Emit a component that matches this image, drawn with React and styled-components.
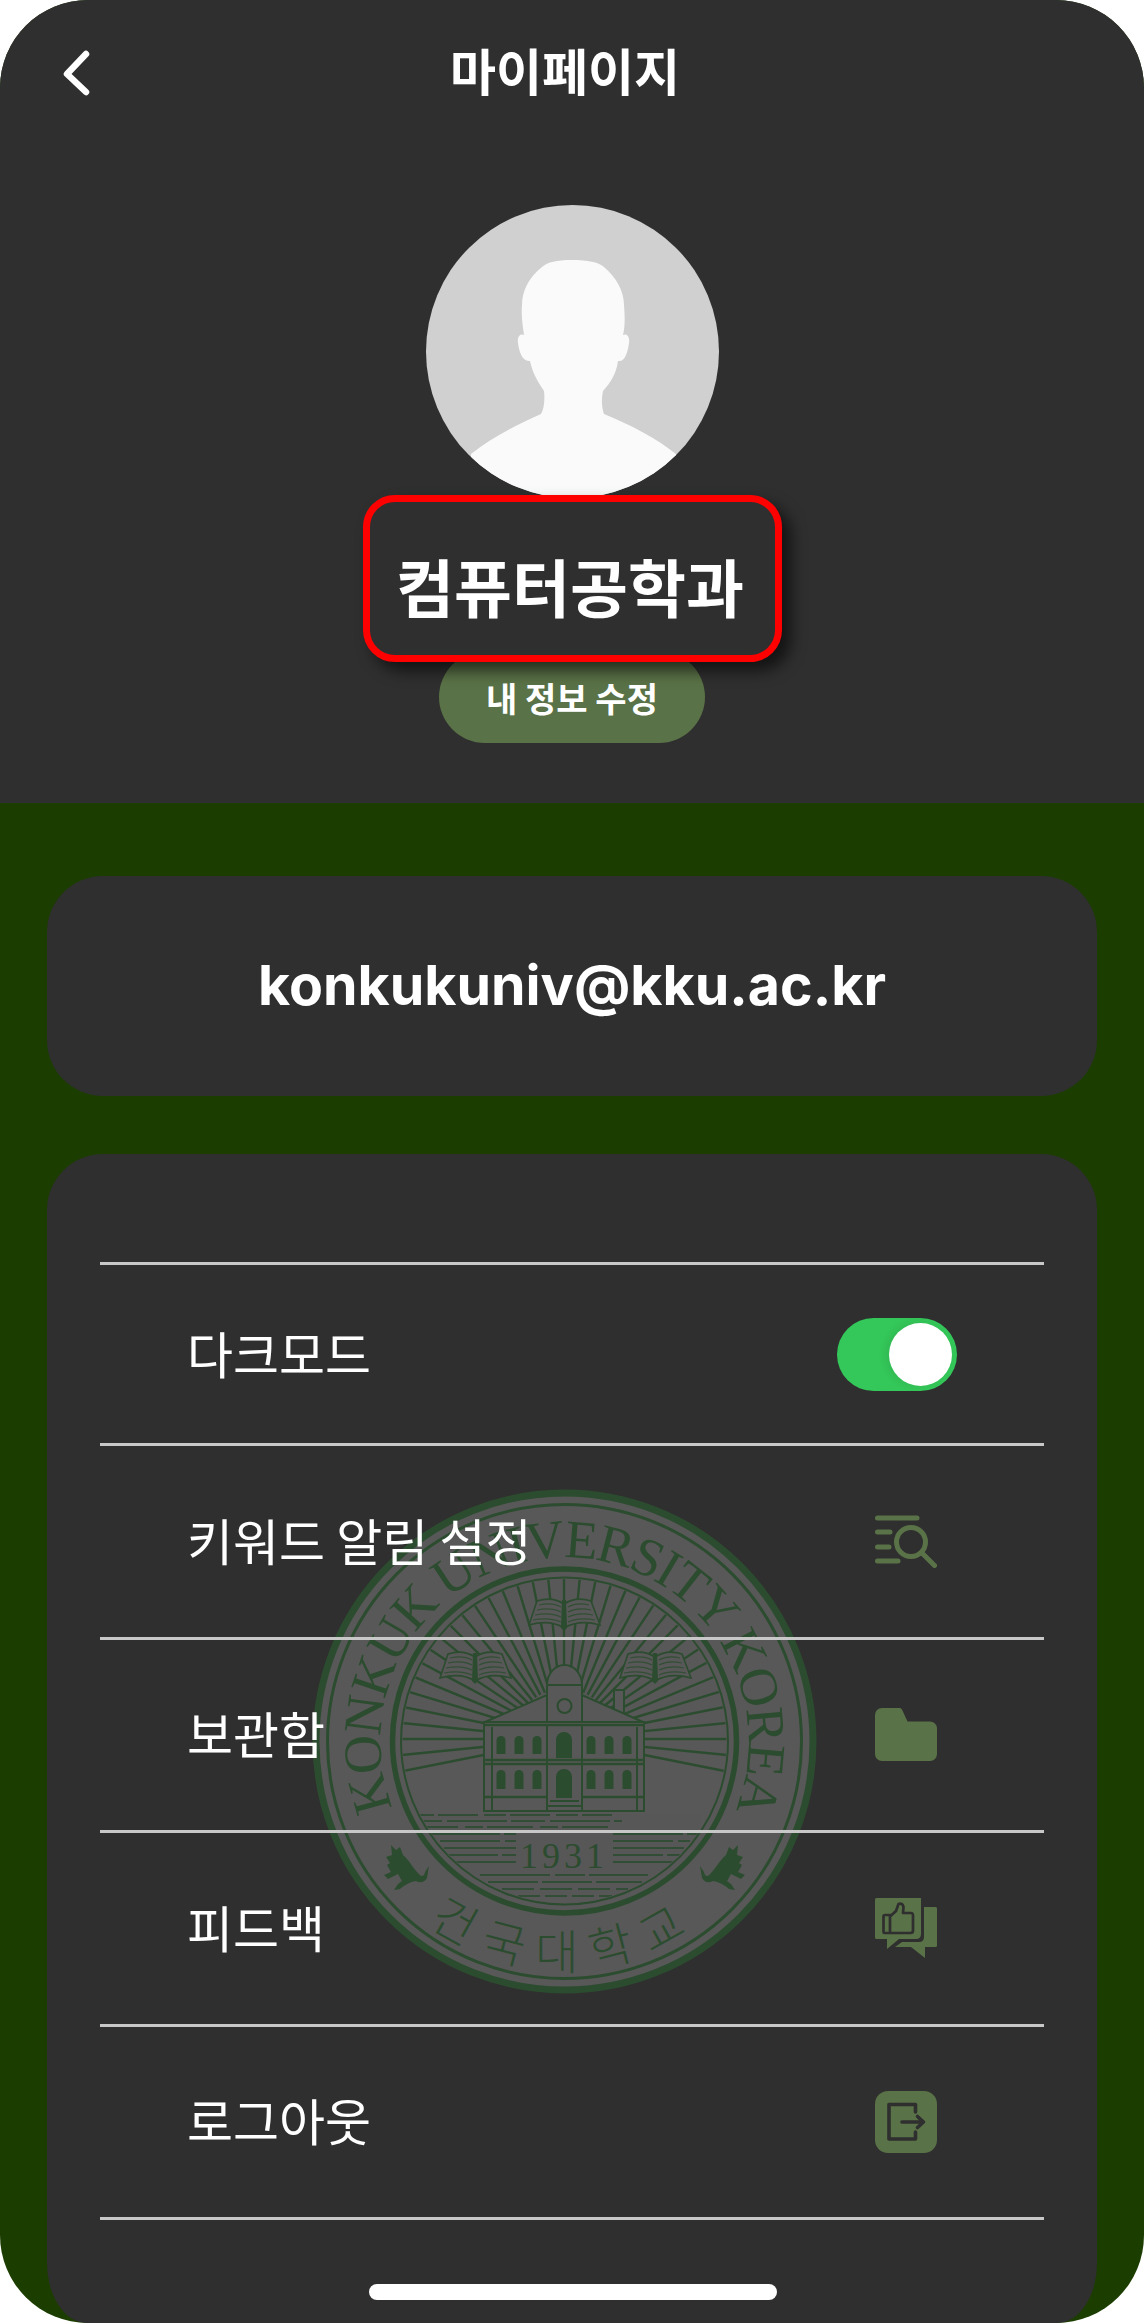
import styled, { createGlobalStyle } from "styled-components";

const dark = "#2f2f2f";
const moss = "#5a7247";
const sealInk = "#2c4c2f";
const sealFill = "#585858";
const korean = `"Noto Sans CJK KR", "Noto Sans", sans-serif`;

const GlobalStyle = createGlobalStyle`
  html, body {
    margin: 0;
    padding: 0;
    background: #ffffff;
  }
`;

const Phone = styled.div`
  position: relative;
  display: flex;
  flex-direction: column;
  width: 1144px;
  height: 2323px;
  overflow: hidden;
  border-radius: 88px;
  background-color: #1c3d00;
  font-family: ${korean};
  color: #ffffff;
`;

const Header = styled.header`
  display: flex;
  flex-direction: column;
  align-items: center;
  height: 803px;
  box-sizing: border-box;
  flex-shrink: 0;
  padding-top: 39px;
  background-color: ${dark};
`;

const NavBar = styled.nav`
  display: grid;
  grid-template-columns: 388px 1fr;
  align-items: center;
  align-self: stretch;
  height: 60px;
  padding-left: 62px;
`;

const BackIcon = styled.svg`
  width: 30px;
  height: 46px;
`;

const Title = styled.h1`
  margin: 0;
  padding-bottom: 8px;
  font-size: 50px;
  font-weight: 700;
  line-height: 60px;
  white-space: nowrap;
`;

const Avatar = styled.svg`
  display: block;
  width: 293px;
  height: 293px;
  margin-top: 106px;
`;

const NameBox = styled.div`
  position: relative;
  z-index: 2;
  display: flex;
  align-items: center;
  justify-content: center;
  box-sizing: border-box;
  width: 419px;
  height: 167px;
  margin-top: -3px;
  padding: 11px 4px 0 0;
  border: 7px solid #ff0000;
  border-radius: 32px;
  background-color: ${dark};
  box-shadow: 9px 9px 15px rgba(0, 0, 0, 0.6);
  font-size: 63px;
  font-weight: 700;
  white-space: nowrap;
`;

const EditButton = styled.button`
  display: block;
  width: 266px;
  height: 92px;
  margin-top: -11px;
  padding: 0;
  border: none;
  border-radius: 46px;
  background-color: ${moss};
  color: #ffffff;
  font-family: inherit;
  font-size: 34px;
  font-weight: 700;
  white-space: nowrap;
`;

const Body = styled.main`
  display: flex;
  flex: 1;
  flex-direction: column;
  gap: 58px;
  padding: 73px 47px 0;
`;

const EmailCard = styled.div`
  display: flex;
  align-items: center;
  justify-content: center;
  height: 220px;
  box-sizing: border-box;
  padding-bottom: 4px;
  border-radius: 56px;
  background-color: ${dark};
  font-family: Inter, "Liberation Sans", sans-serif;
  font-size: 55.5px;
  font-weight: 700;
`;

const MenuCard = styled.section`
  position: relative;
  flex: 1;
  padding: 108px 53px 0;
  border-radius: 56px 56px 40px 40px / 56px 56px 60px 60px;
  background-color: ${dark};
`;

const Seal = styled.svg`
  position: absolute;
  top: 335px;
  left: 265px;
  width: 505px;
  height: 505px;
`;

const MenuList = styled.ul`
  position: relative;
  margin: 0;
  padding: 0;
  list-style: none;
  border-top: 3px solid #c8c8c8;
`;

const MenuRow = styled.li`
  display: flex;
  align-items: center;
  justify-content: space-between;
  height: ${(p) => (p.$first ? 178 : 190.5)}px;
  padding: 0 87px 0 87px;
  border-bottom: 3px solid #c8c8c8;
`;

const MenuLabel = styled.span`
  padding-bottom: 5px;
  font-size: 50px;
  font-weight: 400;
  white-space: nowrap;
`;

const Toggle = styled.div`
  position: relative;
  width: 120px;
  height: 73px;
  border-radius: 37px;
  background-color: #34c759;
`;

const ToggleKnob = styled.span`
  position: absolute;
  top: 5px;
  right: 5px;
  width: 63px;
  height: 63px;
  border-radius: 50%;
  background-color: #ffffff;
  box-shadow: -3px 0 8px rgba(0, 0, 0, 0.08);
`;

const RowIcon = styled.svg`
  display: block;
  width: 62px;
  height: ${(p) => p.$h}px;
  margin-right: 20px;
`;

const HomeBar = styled.div`
  position: absolute;
  bottom: 23px;
  left: 369px;
  width: 408px;
  height: 16px;
  border-radius: 8px;
  background-color: #ffffff;
`;

const SealText = styled.text`
  font-family: "Liberation Serif", serif;
  fill: ${sealInk};
`;

const SealKorean = styled.text`
  font-family: ${korean};
  font-weight: 300;
  fill: ${sealInk};
`;

const SearchIcon = () => (
  <RowIcon $h={53} viewBox="0 0 62 53" fill="none" stroke={moss} strokeWidth="5" strokeLinecap="round">
    <path d="M2.5 3H42M2.5 17H15M2.5 32H14M2.5 46H23" />
    <circle cx="36" cy="27" r="14.5" />
    <path d="M47 38L59.5 50.5" />
  </RowIcon>
);

const FolderIcon = () => (
  <RowIcon $h={53} viewBox="0 0 62 53" fill={moss}>
    <path d="M7 0H24C25.5 0 26.5.6 27.2 2L32.5 13.5H55A7 7 0 0 1 62 20.5V46A7 7 0 0 1 55 53H7A7 7 0 0 1 0 46V7A7 7 0 0 1 7 0Z" />
  </RowIcon>
);

const FeedbackIcon = () => (
  <RowIcon $h={60} viewBox="0 0 62 60">
    <path fill={moss} d="M49 9H60.5A1.5 1.5 0 0 1 62 10.5V47.5A1.5 1.5 0 0 1 60.5 49H50V60L36 49H20L27 44H44Q49 44 49 39Z" />
    <path fill={moss} d="M1.5 0H46V36Q46 41 41 41H24L12 51V41H1.5A1.5 1.5 0 0 1 0 39.5V1.5A1.5 1.5 0 0 1 1.5 0Z" />
    <path
      fill="none"
      stroke={dark}
      strokeWidth="2.7"
      strokeLinejoin="round"
      d="M10 17H15V35H10Q8.5 35 8.5 33.5V18.5Q8.5 17 10 17ZM15 18.5L21 13L23.5 6Q27.5 4.5 28.5 9L28 15H36Q38 15 38 17.5V32.5Q38 35 35.5 35H15"
    />
  </RowIcon>
);

const LogoutIcon = () => (
  <RowIcon $h={62} viewBox="0 0 62 62">
    <rect width="62" height="62" rx="13" fill={moss} />
    <path
      fill="none"
      stroke={dark}
      strokeWidth="3.6"
      strokeLinejoin="round"
      strokeLinecap="round"
      d="M40.5 21V13.5H14V48H40.5V41M27 31H48M42.5 25.5L48.5 31L42.5 36.5"
    />
  </RowIcon>
);

// rays behind the building, thin strokes fanning out from the tower
const rays = Array.from({ length: 64 }, (_, i) => {
  const a = (i * 5.625 * Math.PI) / 180;
  return {
    x1: 252 + 50 * Math.cos(a),
    y1: 250 + 50 * Math.sin(a),
    x2: 252 + 200 * Math.cos(a),
    y2: 250 + 200 * Math.sin(a),
  };
});

const waterLines = [
  [326, 100, 300, "22 4 40 6"],
  [332, 96, 310, "34 5 60 4"],
  [338, 100, 300, "46 7 18 4"],
  [345, 118, 204, "70 4"],
  [345, 301, 388, "70 4"],
  [352, 128, 204, "60 5"],
  [352, 301, 378, "60 5"],
  [359, 132, 204, "80 3"],
  [359, 301, 372, "80 3"],
  [366, 136, 204, "50 4"],
  [366, 301, 368, "50 4"],
  [373, 142, 204, "62 3"],
  [373, 301, 362, "62 3"],
  [386, 168, 336, "70 5 30 4"],
  [393, 176, 330, "50 4"],
  [400, 190, 316, "32 6"],
  [407, 206, 300, "22 5"],
];

const Book = ({ x, y }) => (
  <g transform={`translate(${x} ${y})`}>
    <path
      fill={sealFill}
      stroke={sealInk}
      strokeWidth="1.6"
      d="M0 27L8 3Q23 -2 35 6Q47 -2 62 3L71 27Q50 21 35 30Q21 21 0 27Z"
    />
    <path
      fill="none"
      stroke={sealInk}
      strokeWidth="1.1"
      opacity="0.85"
      d="M10 7Q23 4 32 9M8 12Q22 9 32 14M6 17Q21 14 32 19M4 22Q20 19 32 24M39 9Q48 4 60 7M39 14Q49 9 62 12M39 19Q50 14 64 17M39 24Q50 19 66 22"
    />
    <path fill={sealInk} d="M33 2H37L38 30L35 33L32 30Z" />
  </g>
);

const Windows = ({ y, h }) =>
  [189, 207, 225, 279, 297, 315].map((x) => (
    <path key={x} fill={sealInk} d={`M${x - 4.5} ${y + h}V${y + 4.5}A4.5 4.5 0 0 1 ${x + 4.5} ${y + 4.5}V${y + h}Z`} />
  ));

const Bull = () => (
  <path
    fill={sealInk}
    d="M79 356L84 361L88 358L91 366C97 371 101 379 106 384C109 388 112 388 113 383L117 377L115 389C112 394 108 394 104 392C98 393 92 396 88 400L82 401L86 395L90 392L86 385L76 390L72 386L79 383L75 376L78 374L74 368L80 366Z"
  />
);

const KonkukSeal = () => (
  <Seal viewBox="0 0 505 505">
    <defs>
      <clipPath id="sealRays">
        <circle cx="252.5" cy="252" r="162" />
      </clipPath>
      <path id="sealTop" d="M101.8 358A184 184 0 1 1 403.2 358" />
      <path id="sealBottom" d="M55 366A228 228 0 0 0 450 366" />
    </defs>
    <circle cx="252.5" cy="252.5" r="248.5" fill={sealFill} stroke={sealInk} strokeWidth="7" />
    <circle cx="252.5" cy="252.5" r="237" fill="none" stroke={sealInk} strokeWidth="3" />
    <circle cx="252.5" cy="252" r="172" fill="none" stroke={sealInk} strokeWidth="5.5" />
    <circle cx="252.5" cy="252" r="163.5" fill="none" stroke={sealInk} strokeWidth="2" />

    <SealText fontSize="54" textAnchor="middle" letterSpacing="-2.4">
      <textPath href="#sealTop" startOffset="50%">
        KONKUK UNIVERSITY KOREA
      </textPath>
    </SealText>
    <SealKorean fontSize="47" textAnchor="middle" letterSpacing="15">
      <textPath href="#sealBottom" startOffset="50%">
        건국대학교
      </textPath>
    </SealKorean>
    <Bull />
    <g transform="translate(505 0) scale(-1 1)">
      <Bull />
    </g>

    <g clipPath="url(#sealRays)">
      <g stroke={sealInk} strokeWidth="2.4">
        {rays
          .filter((r) => r.y2 < 300)
          .map((r, i) => (
            <line key={i} {...r} />
          ))}
      </g>
      <rect x="80" y="322" width="345" height="100" fill={sealFill} />
      <g stroke={sealInk} strokeWidth="2" opacity="0.85">
        {waterLines.map(([y, x1, x2, dash]) => (
          <line key={`${y}-${x1}`} x1={x1} y1={y} x2={x2} y2={y} strokeDasharray={dash} />
        ))}
      </g>
    </g>

    <Book x={217} y={109} />
    <Book x={128} y={162} />
    <Book x={308} y={162} />

    {/* building */}
    <g fill={sealFill} stroke={sealInk} strokeWidth="2">
      <path d="M252 163V176" />
      <path d="M235 196A17.5 20 0 0 1 270 196Z" />
      <rect x="302" y="201" width="10" height="33" />
      <path d="M173 233L235 206H270L331 233Z" />
      <rect x="235" y="196" width="35" height="40" />
      <circle cx="252.5" cy="217" r="7" />
      <rect x="172" y="233" width="160" height="89" />
      <path d="M180 238V322M325 238V322M235 236V322M270 236V322" fill="none" />
      <path d="M172 236H332M172 271H332M172 275H332M172 308H235M270 308H332" fill="none" strokeWidth="2.5" />
      <path d="M238 312H267M236 317H269" fill="none" />
    </g>
    <Windows y={247} h={18} />
    <Windows y={281} h={19} />
    <path fill={sealInk} d="M244 269V251A8 8 0 0 1 260 251V269Z" />
    <path fill={sealInk} d="M244 309V288A8 8 0 0 1 260 288V309Z" />

    <SealText x="252" y="379" fontSize="36" textAnchor="middle" letterSpacing="4">
      1931
    </SealText>
  </Seal>
);

export default function App() {
  return (
    <>
      <GlobalStyle />
      <Phone>
        <Header>
          <NavBar>
            <BackIcon viewBox="0 0 30 46" fill="none" stroke="#ffffff" strokeWidth="6.5" strokeLinecap="round" strokeLinejoin="round">
              <path d="M24 4L5 24L24 42" />
            </BackIcon>
            <Title>마이페이지</Title>
          </NavBar>
          <Avatar viewBox="0 0 293 293">
            <defs>
              <clipPath id="avatarClip">
                <circle cx="146.5" cy="146.5" r="146.5" />
              </clipPath>
            </defs>
            <g clipPath="url(#avatarClip)">
              <rect width="293" height="293" fill="#d0d0d0" />
              <path
                fill="#fafafa"
                d="M146 55C130 55 122 57 116 62C103 72 96 86 96 100C95 112 97 122 98 130C94 128 91 132 92 138C93 146 96 156 103 156L104 156C107 170 113 178 118 186C119 195 118 204 115 209C90 220 65 233 45 249L45 300L250 300L250 249C230 233 205 220 178 209C176 204 175 195 177 186C184 178 190 170 192 156L194 156C199 156 202 146 203 138C204 132 201 128 197 130C199 122 199 112 198 100C198 86 190 72 178 62C172 57 162 55 146 55Z"
              />
            </g>
          </Avatar>
          <NameBox>컴퓨터공학과</NameBox>
          <EditButton>내 정보 수정</EditButton>
        </Header>
        <Body>
          <EmailCard>konkukuniv@kku.ac.kr</EmailCard>
          <MenuCard>
            <KonkukSeal />
            <MenuList>
              <MenuRow $first>
                <MenuLabel>다크모드</MenuLabel>
                <Toggle>
                  <ToggleKnob />
                </Toggle>
              </MenuRow>
              <MenuRow>
                <MenuLabel>키워드 알림 설정</MenuLabel>
                <SearchIcon />
              </MenuRow>
              <MenuRow>
                <MenuLabel>보관함</MenuLabel>
                <FolderIcon />
              </MenuRow>
              <MenuRow>
                <MenuLabel>피드백</MenuLabel>
                <FeedbackIcon />
              </MenuRow>
              <MenuRow>
                <MenuLabel>로그아웃</MenuLabel>
                <LogoutIcon />
              </MenuRow>
            </MenuList>
          </MenuCard>
        </Body>
        <HomeBar />
      </Phone>
    </>
  );
}
